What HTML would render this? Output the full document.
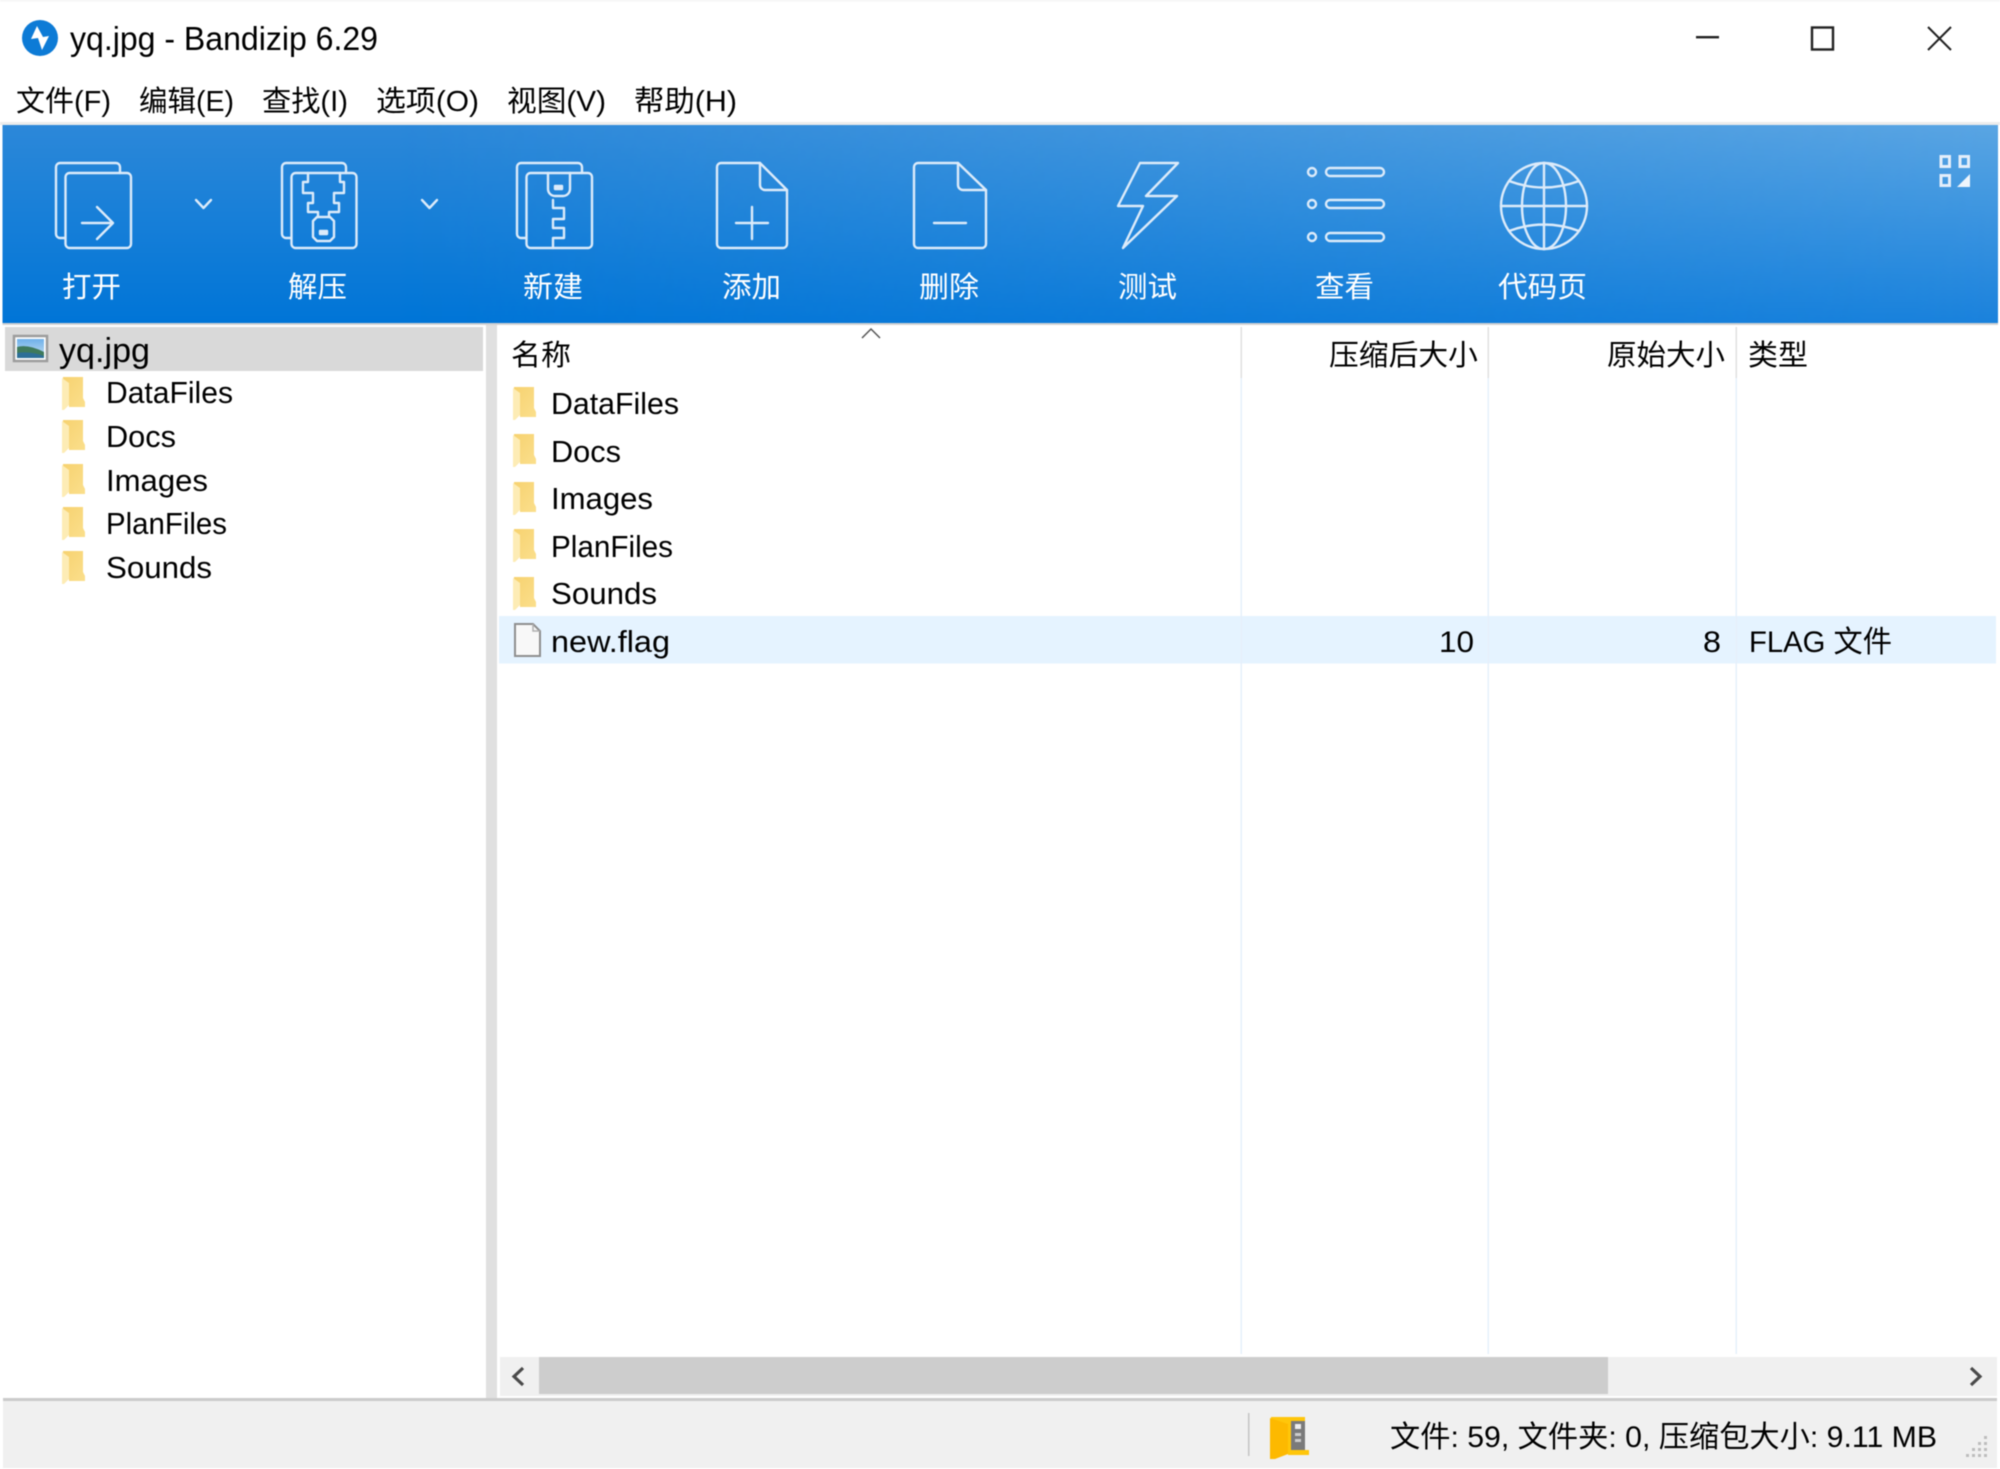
<!DOCTYPE html>
<html lang="zh-CN"><head><meta charset="utf-8"><title>yq.jpg - Bandizip 6.29</title>
<style>
html,body{margin:0;padding:0;background:#fff;width:2000px;height:1469px;overflow:hidden}
svg{display:block;filter:blur(.45px)}
text{font-family:"Liberation Sans","Noto Sans CJK SC",sans-serif;font-size:31px;fill:#000}
.c{font-family:"Noto Sans CJK SC","Liberation Sans",sans-serif;font-size:29px}
.m{font-family:"Liberation Sans","Noto Sans CJK SC",sans-serif;font-size:29px}
.s{font-size:30px}
.t text{fill:#fff;font-family:"Noto Sans CJK SC",sans-serif;font-size:29px}
.i{fill:none;stroke:#dcebfa;stroke-width:2.4;stroke-linejoin:round;stroke-linecap:round}
</style></head><body>
<svg xmlns="http://www.w3.org/2000/svg" width="2000" height="1469" viewBox="0 0 2000 1469">
<defs>
<linearGradient id="tl" gradientUnits="userSpaceOnUse" x1="0" y1="125" x2="0" y2="323"><stop offset="0" stop-color="#2c88d9"/><stop offset="1" stop-color="#0075d7"/></linearGradient>
<linearGradient id="tr" gradientUnits="userSpaceOnUse" x1="0" y1="125" x2="0" y2="323"><stop offset="0" stop-color="#5aa5e3"/><stop offset="1" stop-color="#1a82dc"/></linearGradient>
<linearGradient id="hm" gradientUnits="userSpaceOnUse" x1="400" y1="0" x2="2000" y2="0"><stop offset="0" stop-color="#000"/><stop offset="1" stop-color="#fff"/></linearGradient>
<mask id="mk" maskUnits="userSpaceOnUse" x="0" y="120" width="2000" height="210"><rect x="0" y="120" width="2000" height="210" fill="url(#hm)"/></mask>
<linearGradient id="fo" x1="0" y1="0" x2="1" y2="1"><stop offset="0" stop-color="#f7d270"/><stop offset="1" stop-color="#fbdf8c"/></linearGradient>
<linearGradient id="sky" x1="0" y1="0" x2="0" y2="1"><stop offset="0" stop-color="#6fb1ea"/><stop offset="1" stop-color="#c5def0"/></linearGradient>
<g id="fd"><path d="M1 0H21V21L23 25V30H7V10H1Z" fill="url(#fo)"/><path d="M0 1L7 6V28L2 33H0Z" fill="#fdecb5"/></g>
</defs>
<rect width="2000" height="1469" fill="#fff"/>
<rect width="2000" height="1.5" fill="#f4f4f4"/>

<!-- title -->
<circle cx="40" cy="38" r="18" fill="#0d7bd6"/>
<path d="M37 26L31 39L38 38L42 50L49 36L43 37Z" fill="#fff"/>
<text x="70" y="50" textLength="308" lengthAdjust="spacingAndGlyphs" style="font-size:33px">yq.jpg - Bandizip 6.29</text>
<rect x="1696" y="36" width="23" height="2.4" fill="#222"/>
<rect x="1812" y="27.5" width="21" height="22" fill="none" stroke="#222" stroke-width="2.4"/>
<path d="M1928 27L1951 50M1951 27L1928 50" stroke="#222" stroke-width="2" fill="none"/>

<!-- menu -->
<text class="m" x="16" y="111" textLength="95" lengthAdjust="spacingAndGlyphs">文件(F)</text>
<text class="m" x="139" y="111" textLength="95" lengthAdjust="spacingAndGlyphs">编辑(E)</text>
<text class="m" x="262" y="111" textLength="86" lengthAdjust="spacingAndGlyphs">查找(I)</text>
<text class="m" x="376" y="111" textLength="103" lengthAdjust="spacingAndGlyphs">选项(O)</text>
<text class="m" x="507" y="111" textLength="99" lengthAdjust="spacingAndGlyphs">视图(V)</text>
<text class="m" x="634" y="111" textLength="103" lengthAdjust="spacingAndGlyphs">帮助(H)</text>

<!-- toolbar -->
<rect x="0" y="122" width="2000" height="3" fill="#ececec"/>
<rect x="2.5" y="125" width="1995.5" height="198" fill="url(#tl)"/>
<rect x="2.5" y="125" width="1995.5" height="198" fill="url(#tr)" mask="url(#mk)"/>
<rect x="2.5" y="323" width="1995.5" height="2" fill="#d2d2d2"/>

<g class="i">
<!-- open -->
<path d="M65 238H60a4 4 0 0 1-4-4V167a4 4 0 0 1 4-4H116a4 4 0 0 1 4 4V173"/>
<rect x="65.500" y="173" width="65.500" height="75" rx="4"/>
<path d="M82 223H113M97 207L113 223L97 239"/>
<path d="M196 200L203.500 208L211 200"/>
<!-- extract -->
<path d="M291 238H286a4 4 0 0 1-4-4V167a4 4 0 0 1 4-4H342a4 4 0 0 1 4 4V173"/>
<rect x="291.500" y="173" width="65" height="75" rx="4"/>
<path d="M308 173V182H303V193H313V203H308V212H318V217M340 173V182H344V193H334V203H339V212H329V217"/>
<path d="M317 217H330L334 221V237L330 241H317L313 237V221Z"/>
<rect x="320" y="231" width="7" height="3" fill="#dcebfa"/>
<path d="M422 200L429.500 208L437 200"/>
<!-- new -->
<path d="M526 238H521a4 4 0 0 1-4-4V167a4 4 0 0 1 4-4H578a4 4 0 0 1 4 4V173"/>
<rect x="526.500" y="173" width="65.500" height="75" rx="4"/>
<path d="M548 173V189a7 7 0 0 0 7 7H563a7 7 0 0 0 7-7V173"/>
<rect x="555" y="186" width="7" height="3" fill="#dcebfa"/>
<path d="M553 200V208H564V219H553V228H564V238H553V248"/>
<!-- add -->
<path d="M722 163H760L787 190V244a4 4 0 0 1-4 4H721a4 4 0 0 1-4-4V167a4 4 0 0 1 4-4Z"/>
<path d="M760 163V185a5 5 0 0 0 5 5H787M736 223H768M752 207V239"/>
<!-- delete -->
<path d="M919 163H958L986 190V244a4 4 0 0 1-4 4H918a4 4 0 0 1-4-4V167a4 4 0 0 1 4-4Z"/>
<path d="M958 163V185a5 5 0 0 0 5 5H986M934 223H966"/>
<!-- test -->
<path d="M1140 163H1178L1146 196H1177L1123 248L1143 206H1118Z"/>
<!-- view -->
<circle cx="1312" cy="172" r="4"/><circle cx="1312" cy="204" r="4"/><circle cx="1312" cy="237" r="4"/>
<rect x="1326" y="168" width="58" height="8" rx="4"/><rect x="1326" y="200" width="58" height="8" rx="4"/><rect x="1326" y="233" width="58" height="8" rx="4"/>
<!-- globe -->
<circle cx="1544" cy="206" r="43"/>
<ellipse cx="1544" cy="206" rx="22" ry="43"/>
<path d="M1544 163V249M1501 206H1587M1509 181Q1544 194 1579 181M1509 231Q1544 218 1579 231"/>
</g>

<g fill="none" stroke="#e3eefa" stroke-width="3">
<rect x="1941" y="156.500" width="8.500" height="10" /><rect x="1960" y="156.500" width="8.500" height="10"/><rect x="1941" y="175.500" width="8.500" height="10"/>
</g>
<path d="M1970 174V187H1957Z" fill="#eef5fc"/>

<g class="t">
<text x="62" y="297" textLength="59" lengthAdjust="spacingAndGlyphs">打开</text>
<text x="288" y="297" textLength="59" lengthAdjust="spacingAndGlyphs">解压</text>
<text x="523" y="297" textLength="60" lengthAdjust="spacingAndGlyphs">新建</text>
<text x="722" y="297" textLength="59" lengthAdjust="spacingAndGlyphs">添加</text>
<text x="919" y="297" textLength="60" lengthAdjust="spacingAndGlyphs">删除</text>
<text x="1118" y="297" textLength="59" lengthAdjust="spacingAndGlyphs">测试</text>
<text x="1315" y="297" textLength="59" lengthAdjust="spacingAndGlyphs">查看</text>
<text x="1498" y="297" textLength="89" lengthAdjust="spacingAndGlyphs">代码页</text>
</g>

<!-- tree -->
<rect x="5" y="327" width="478" height="44" fill="#d9d9d9"/>
<rect x="486" y="325" width="11" height="1073" fill="#e0e0e0"/>
<rect x="14" y="336" width="33" height="25" fill="#fff" stroke="#9c9c9c" stroke-width="2.5"/>
<rect x="17" y="339" width="27" height="19" fill="url(#sky)"/>
<path d="M17 347Q28 344 44 352V358H17Z" fill="#3f7a5c"/>
<path d="M17 353Q30 351 44 356V358H17Z" fill="#2d6f97"/>
<text x="59" y="362" textLength="91" lengthAdjust="spacingAndGlyphs" style="font-size:34px">yq.jpg</text>

<use href="#fd" x="62" y="377"/><use href="#fd" x="62" y="420"/><use href="#fd" x="62" y="464"/><use href="#fd" x="62" y="507"/><use href="#fd" x="62" y="551"/>
<text x="106" y="403" textLength="127" lengthAdjust="spacingAndGlyphs">DataFiles</text>
<text x="106" y="447" textLength="70" lengthAdjust="spacingAndGlyphs">Docs</text>
<text x="106" y="491" textLength="102" lengthAdjust="spacingAndGlyphs">Images</text>
<text x="106" y="534" textLength="121" lengthAdjust="spacingAndGlyphs">PlanFiles</text>
<text x="106" y="578" textLength="106" lengthAdjust="spacingAndGlyphs">Sounds</text>

<!-- list -->
<rect x="499" y="616" width="1497" height="47.500" fill="#e5f3ff"/>
<g fill="#e6f0fb">
<rect x="1240.500" y="378" width="1.500" height="976"/><rect x="1487.500" y="378" width="1.500" height="976"/><rect x="1735.500" y="378" width="1.500" height="976"/>
</g>
<g fill="#e0e0e0">
<rect x="1240.500" y="327" width="1.500" height="51"/><rect x="1487.500" y="327" width="1.500" height="51"/><rect x="1735.500" y="327" width="1.500" height="51"/>
</g>
<path d="M862 338L871 329L880 338" fill="none" stroke="#555" stroke-width="1.500"/>
<text class="c" x="511" y="365" textLength="60" lengthAdjust="spacingAndGlyphs">名称</text>
<text class="c" x="1329" y="365" textLength="149" lengthAdjust="spacingAndGlyphs">压缩后大小</text>
<text class="c" x="1607" y="365" textLength="118" lengthAdjust="spacingAndGlyphs">原始大小</text>
<text class="c" x="1748" y="365" textLength="60" lengthAdjust="spacingAndGlyphs">类型</text>

<use href="#fd" x="513" y="387"/><use href="#fd" x="513" y="434"/><use href="#fd" x="513" y="482"/><use href="#fd" x="513" y="529"/><use href="#fd" x="513" y="577"/>
<text x="551" y="414" textLength="128" lengthAdjust="spacingAndGlyphs">DataFiles</text>
<text x="551" y="462" textLength="70" lengthAdjust="spacingAndGlyphs">Docs</text>
<text x="551" y="509" textLength="102" lengthAdjust="spacingAndGlyphs">Images</text>
<text x="551" y="557" textLength="122" lengthAdjust="spacingAndGlyphs">PlanFiles</text>
<text x="551" y="604" textLength="106" lengthAdjust="spacingAndGlyphs">Sounds</text>
<path d="M515 624H533L540 631V656H515Z" fill="#f8f8f8" stroke="#8e8e8e" stroke-width="2"/>
<path d="M533 624V631H540" fill="none" stroke="#b0b0b0" stroke-width="1.500"/>
<text x="551" y="652" textLength="119" lengthAdjust="spacingAndGlyphs">new.flag</text>
<text class="s" x="1439" y="652" textLength="35" lengthAdjust="spacingAndGlyphs">10</text>
<text class="s" x="1703" y="652" textLength="18" lengthAdjust="spacingAndGlyphs">8</text>
<text class="s" x="1749" y="652" textLength="143" lengthAdjust="spacingAndGlyphs">FLAG 文件</text>

<!-- scrollbar -->
<rect x="500" y="1357" width="1497" height="39" fill="#f0f0f0"/>
<rect x="539" y="1357" width="1069" height="37" fill="#cdcdcd"/>
<path d="M523 1368L514 1376.500L523 1385" fill="none" stroke="#4a4a4a" stroke-width="3.200"/>
<path d="M1971 1368L1980 1376.500L1971 1385" fill="none" stroke="#4a4a4a" stroke-width="3.200"/>

<!-- status -->
<rect x="3" y="1401" width="1994" height="67" fill="#f0f0f0"/>
<rect x="3" y="1398" width="1994" height="3" fill="#cbcbcb"/>
<rect x="1248" y="1413" width="1.500" height="43" fill="#c4c4c4"/>
<path d="M1271 1417H1305V1450H1309V1455H1288V1454H1271Z" fill="#ffc60a"/>
<path d="M1270 1418L1288 1424V1454L1275 1459H1270Z" fill="#fdb900"/>
<rect x="1291" y="1421" width="14" height="29" fill="#7a7a7a"/>
<rect x="1295" y="1424" width="6" height="5" fill="#eee"/><rect x="1295" y="1433" width="6" height="3" fill="#ccc"/><rect x="1295" y="1439" width="6" height="3" fill="#ccc"/>
<text class="s" x="1390" y="1447" textLength="547" lengthAdjust="spacingAndGlyphs">文件: 59, 文件夹: 0, 压缩包大小: 9.11 MB</text>
<g fill="#bdbdbd">
<rect x="1984" y="1436" width="3" height="3"/><rect x="1984" y="1442" width="3" height="3"/><rect x="1978" y="1442" width="3" height="3"/><rect x="1984" y="1448" width="3" height="3"/><rect x="1978" y="1448" width="3" height="3"/><rect x="1972" y="1448" width="3" height="3"/><rect x="1984" y="1454" width="3" height="3"/><rect x="1978" y="1454" width="3" height="3"/><rect x="1972" y="1454" width="3" height="3"/><rect x="1966" y="1454" width="3" height="3"/>
</g>
</svg>
</body></html>
